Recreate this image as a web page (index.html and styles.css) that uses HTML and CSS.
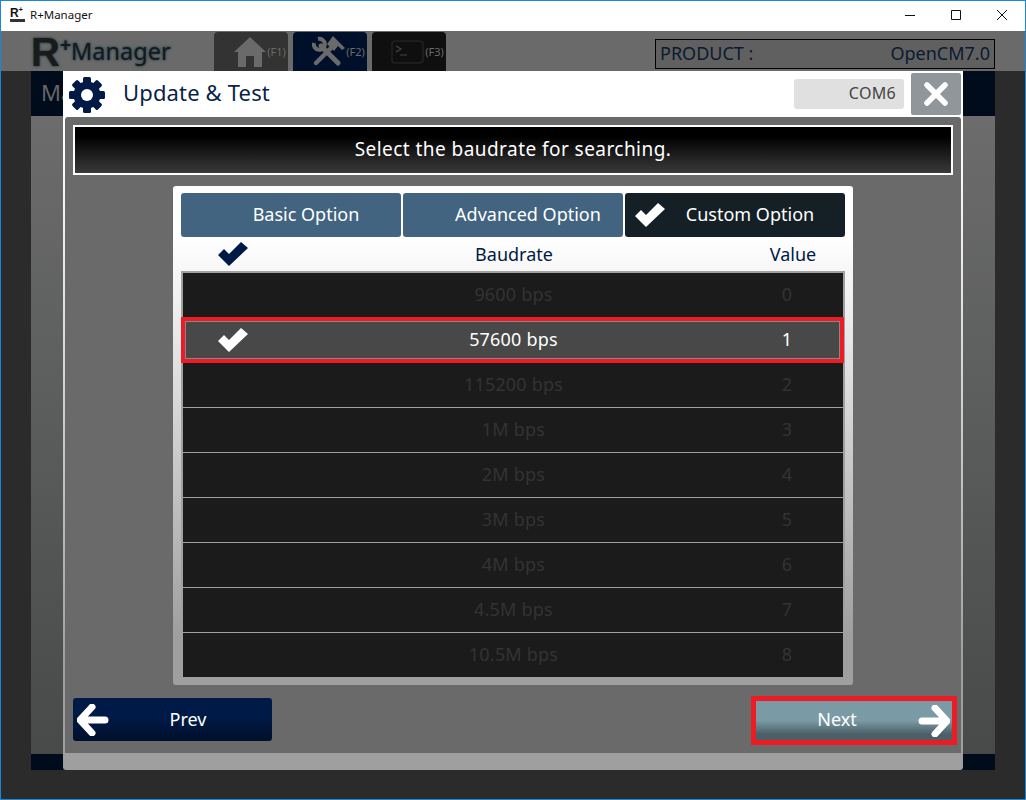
FILE: index.html
```html
<!DOCTYPE html>
<html lang="en">

<head>
    <meta charset="UTF-8">
    <title>R+Manager</title>
    <link rel="stylesheet" href="styles.css">
</head>

<body>
    <div class="window">
        <div class="titlebar">
            <div class="app-icon">R<sup>+</sup></div>
            <span class="app-name">R+Manager</span>
            <div class="controls">
                <svg width="12" height="12" viewBox="0 0 12 12"><path d="M1 6.5H11" stroke="#111" fill="none"/></svg>
                <svg width="12" height="12" viewBox="0 0 12 12"><path d="M1.5 1.5H10.5V10.5H1.5Z" stroke="#111" fill="none"/></svg>
                <svg width="12" height="12" viewBox="0 0 12 12"><path d="M1 1L11 11M11 1L1 11" stroke="#111" fill="none"/></svg>
            </div>
        </div>

        <div class="app">
            <div class="topbar">
                <div class="logo"><span class="logo-r">R</span><span class="logo-plus">+</span><span>Manager</span></div>
                <div class="nav-tabs">
                    <div class="nav-tab tab-home">
                        <svg width="32" height="30" viewBox="0 0 32 30"><path d="M16 0L32 15H28V30H20V19H12V30H4V15H0Z" fill="#6a6a6a"/></svg>
                        <span>(F1)</span>
                    </div>
                    <div class="nav-tab tab-tools">
                        <svg width="33" height="31" viewBox="0 0 33 31">
                            <path d="M9 10L26 27" stroke="#6a6a6a" stroke-width="5" stroke-linecap="round" fill="none"/>
                            <path d="M6 3A5.5 5.500 0 1 1 2 7" stroke="#6a6a6a" stroke-width="4" fill="none"/>
                            <path d="M4 27L21 10" stroke="#6a6a6a" stroke-width="4.500" stroke-linecap="round" fill="none"/>
                            <path d="M15 8L21 0L33 12L30 14L26 10L22 15Z" fill="#6a6a6a"/>
                        </svg>
                        <span>(F2)</span>
                    </div>
                    <div class="nav-tab tab-term">
                        <svg width="33" height="24" viewBox="0 0 33 24">
                            <rect x="1" y="1" width="31" height="22" rx="3" fill="#0f0f0f" stroke="#222" stroke-width="1.500"/>
                            <path d="M5 6L10 9L5 12M9 15H16" stroke="#444" stroke-width="1.200" fill="none"/>
                        </svg>
                        <span>(F3)</span>
                    </div>
                </div>
                <div class="product">
                    <span>PRODUCT :</span>
                    <span>OpenCM7.0</span>
                </div>
            </div>

            <div class="main">
                <div class="main-head">Ma</div>
                <div class="main-body"></div>
                <div class="main-foot"></div>
            </div>

            <div class="modal">
                <div class="modal-head">
                    <svg class="gear" width="36" height="36" viewBox="0 0 36 36">
                        <g fill="#001a47">
                            <circle cx="18" cy="18" r="13.500"/>
                            <rect x="14" y="0" width="8" height="36" rx="1.500"/>
                            <rect x="14" y="0" width="8" height="36" rx="1.500" transform="rotate(45 18 18)"/>
                            <rect x="14" y="0" width="8" height="36" rx="1.500" transform="rotate(90 18 18)"/>
                            <rect x="14" y="0" width="8" height="36" rx="1.500" transform="rotate(135 18 18)"/>
                        </g>
                        <circle cx="18" cy="18" r="6" fill="#fff"/>
                    </svg>
                    <h1 class="modal-title">Update &amp; Test</h1>
                    <div class="port">COM6</div>
                    <div class="close">
                        <svg width="24" height="24" viewBox="0 0 24 24"><path d="M3 3L21 21M21 3L3 21" stroke="#fff" stroke-width="5.500" stroke-linecap="round" fill="none"/></svg>
                    </div>
                </div>

                <div class="modal-body">
                    <div class="banner">Select the baudrate for searching.</div>

                    <div class="card">
                        <div class="option-tabs">
                            <div class="option-tab">Basic Option</div>
                            <div class="option-tab">Advanced Option</div>
                            <div class="option-tab active">
                                <svg class="tab-check" width="30" height="24" viewBox="0 0 30 24"><path d="M0 13L6 7L11 12L23 0L30 6L11 24Z" fill="#fff"/></svg>
                                Custom Option
                            </div>
                        </div>

                        <div class="table-head">
                            <svg width="30" height="24" viewBox="0 0 30 24"><path d="M0 13L6 7L11 12L23 0L30 6L11 24Z" fill="#001a47"/></svg>
                            <span>Baudrate</span>
                            <span>Value</span>
                        </div>

                        <div class="table">
                            <div class="row"><span></span><span>9600 bps</span><span>0</span></div>
                            <div class="row selected">
                                <svg width="30" height="24" viewBox="0 0 30 24"><path d="M0 13L6 7L11 12L23 0L30 6L11 24Z" fill="#fff"/></svg>
                                <span>57600 bps</span><span>1</span>
                            </div>
                            <div class="row"><span></span><span>115200 bps</span><span>2</span></div>
                            <div class="row"><span></span><span>1M bps</span><span>3</span></div>
                            <div class="row"><span></span><span>2M bps</span><span>4</span></div>
                            <div class="row"><span></span><span>3M bps</span><span>5</span></div>
                            <div class="row"><span></span><span>4M bps</span><span>6</span></div>
                            <div class="row"><span></span><span>4.5M bps</span><span>7</span></div>
                            <div class="row"><span></span><span>10.5M bps</span><span>8</span></div>
                        </div>
                    </div>

                    <div class="modal-foot">
                        <div class="btn btn-prev">
                            <svg width="32" height="32" viewBox="0 0 32 32"><path d="M15 3L3 16L15 29M4 16H28" stroke="#fff" stroke-width="7" stroke-linecap="round" stroke-linejoin="round" fill="none"/></svg>
                            <span>Prev</span>
                        </div>
                        <div class="btn btn-next">
                            <span>Next</span>
                            <svg width="32" height="32" viewBox="0 0 32 32"><path d="M17 3L29 16L17 29M28 16H4" stroke="#fff" stroke-width="7" stroke-linecap="round" stroke-linejoin="round" fill="none"/></svg>
                        </div>
                    </div>
                </div>
            </div>
        </div>
    </div>
</body>

</html>
```

FILE: styles.css
```css
* {
    box-sizing: border-box;
}

body {
    margin: 0;
    font-family: "Noto Sans", sans-serif;
}

.window {
    width: 1026px;
    height: 800px;
    border: 1px solid #1a86d9;
    display: flex;
    flex-direction: column;
    background: #2b2b2b;
    overflow: hidden;
}

/* Title bar */
.titlebar {
    height: 30px;
    background: #fff;
    display: flex;
    align-items: center;
    padding-left: 9px;
    flex-shrink: 0;
}

.app-icon {
    width: 15px;
    height: 15px;
    border-bottom: 3px solid #333;
    margin-top: -3px;
    font-family: "Liberation Sans", sans-serif;
    font-weight: bold;
    font-size: 12px;
    line-height: 12px;
    color: #111;
    white-space: nowrap;
}

.app-icon sup {
    font-size: 7px;
    line-height: 0;
}

.app-name {
    font-size: 11.5px;
    color: #111;
    margin-left: 5px;
    margin-top: -3px;
}

.controls {
    margin-left: auto;
    display: flex;
    gap: 34px;
    padding-right: 17px;
    margin-top: -2px;
}

/* App behind the dialog */
.app {
    flex: 1;
    position: relative;
    display: flex;
    flex-direction: column;
}

.topbar {
    height: 40px;
    background: #6a6a6a;
    display: flex;
    align-items: flex-end;
    padding: 0 30px 0 30px;
    flex-shrink: 0;
}

.logo {
    width: 183px;
    height: 39px;
    display: flex;
    align-items: center;
    font-size: 23.5px;
    color: #14191c;
    text-shadow: 0 0 3px #2b4550, 0 0 2px #2b4550;
    line-height: 1;
}

.logo-r {
    font-family: "Liberation Sans", sans-serif;
    font-weight: bold;
    font-size: 40px;
    color: #1a1a1a;
}

.logo-plus {
    font-family: "Liberation Sans", sans-serif;
    font-weight: bold;
    font-size: 19px;
    align-self: flex-start;
    margin-top: 3px;
}

.nav-tabs {
    display: flex;
    gap: 5px;
}

.nav-tab {
    width: 74px;
    height: 39px;
    border-radius: 4px 4px 0 0;
    display: flex;
    align-items: center;
    justify-content: flex-end;
    padding-right: 1px;
    font-size: 11px;
    color: #6a6a6a;
}

.nav-tab span {
    width: 21px;
    text-align: center;
}

.tab-home {
    background: #333;
}

.tab-tools {
    background: #00102a;
}

.tab-term {
    background: #0f0f0f;
}

.product {
    margin-left: auto;
    width: 340px;
    height: 30px;
    margin-bottom: 2px;
    border: 1px solid #000;
    background: #606060;
    display: flex;
    justify-content: space-between;
    align-items: center;
    padding: 0 4px 2px 4px;
    font-size: 18px;
    color: #0b1a30;
}

.main {
    flex: 1;
    margin: 0 30px 29px;
    display: flex;
    flex-direction: column;
}

.main-head {
    height: 45px;
    background: #000b1c;
    color: #666;
    font-size: 22px;
    line-height: 43px;
    padding-left: 10px;
}

.main-body {
    flex: 1;
    background: linear-gradient(#6c6c6c, #484a4a);
}

.main-foot {
    height: 16px;
    background: #000b1c;
}

/* Dialog */
.modal {
    position: absolute;
    left: 62px;
    top: 40px;
    width: 900px;
    height: 699px;
    padding: 0 2px 17px;
    display: flex;
    flex-direction: column;
    background: linear-gradient(#fff 10%, #9f9f9f 85%);
    border-radius: 3px;
}

.modal-head {
    height: 46px;
    background: #fff;
    margin: 0 -2px;
    display: flex;
    align-items: center;
    padding-right: 2px;
}

.gear {
    margin-left: 6px;
    flex-shrink: 0;
    position: relative;
    top: 1px;
}

.modal-title {
    margin: 0 0 4px 18px;
    font-size: 22px;
    font-weight: normal;
    color: #0a1f4a;
    letter-spacing: 0.15px;
}

.port {
    margin-left: auto;
    width: 110px;
    height: 30px;
    background: #e0e0e0;
    border-radius: 3px;
    text-align: right;
    padding-right: 8px;
    font-size: 16px;
    letter-spacing: 0.3px;
    line-height: 29px;
    color: #444;
}

.close {
    margin-left: 7px;
    width: 50px;
    height: 42px;
    background: #90969a;
    border-radius: 2px;
    display: flex;
    align-items: center;
    justify-content: center;
}

.modal-body {
    flex: 1;
    background: #6a6a6a;
    border-radius: 3px 3px 0 0;
    padding: 8px 8px 0;
    display: flex;
    flex-direction: column;
}

.banner {
    height: 50px;
    border: 2px solid #fff;
    background: linear-gradient(#000 20%, #3a3a3a);
    color: #fff;
    text-align: center;
    font-size: 19px;
    line-height: 44px;
    letter-spacing: 0.45px;
}

.card {
    margin: 11px 100px 0;
    height: 499px;
    padding: 7px 8px;
    background: linear-gradient(#fff 10%, #e2e2e2 35%, #9f9f9f 90%);
    border-radius: 3px;
}

.option-tabs {
    display: flex;
    gap: 2px;
}

.option-tab {
    flex: 1;
    height: 44px;
    position: relative;
    background: #426480;
    border-radius: 3px;
    color: #fff;
    font-size: 18px;
    line-height: 42px;
    text-align: center;
    padding-left: 30px;
}

.option-tab.active {
    background: #141f26;
}

.tab-check {
    position: absolute;
    left: 10px;
    top: 10px;
}

.table-head {
    height: 34px;
    display: grid;
    grid-template-columns: 104px 458px 100px;
    align-items: center;
    justify-items: center;
    font-size: 18px;
    color: #001a47;
}

.table {
    height: 408px;
    border: 2px solid #a0a0a0;
    background: #1b1b1b;
}

.row {
    height: 45px;
    display: grid;
    grid-template-columns: 100px 461px 86px;
    align-items: center;
    justify-items: center;
    border-top: 1px solid #a0a0a0;
    font-size: 18px;
    letter-spacing: 0.2px;
    color: #333;
    padding-bottom: 2px;
}

.row:first-child {
    height: 44px;
    border-top: none;
}

.row.selected {
    height: 46px;
    margin: 0 -1px 0 -2px;
    border: 4px solid #ed1c24;
    box-shadow: inset 0 0 0 1px #888;
    background: #484848;
    color: #fff;
    grid-template-columns: 96px 465px 82px;
    position: relative;
    padding-bottom: 0;
}

.row.selected span {
    padding-bottom: 2px;
}

.selected + .row {
    height: 44px;
    border-top: none;
}

.modal-foot {
    margin-top: 11px;
    display: flex;
    justify-content: space-between;
    margin-right: -4px;
}

.btn {
    display: flex;
    align-items: center;
    color: #fff;
    font-size: 18px;
}

.btn-prev {
    width: 199px;
    height: 43px;
    margin-top: 2px;
    border-radius: 3px;
    background: linear-gradient(#001a47 45%, #000f2a);
    padding-left: 4px;
}

.btn-prev span {
    margin-left: 43px;
    width: 72px;
    text-align: center;
    padding-bottom: 1px;
}

.btn-next {
    width: 206px;
    height: 49px;
    border: 5px solid #ed1c24;
    background: linear-gradient(#7a9aa6 50%, #4c5f67 85%);
    justify-content: space-between;
    padding-right: 2px;
}

.btn-next span {
    margin-left: 56px;
    width: 50px;
    text-align: center;
    padding-bottom: 3px;
}
```
